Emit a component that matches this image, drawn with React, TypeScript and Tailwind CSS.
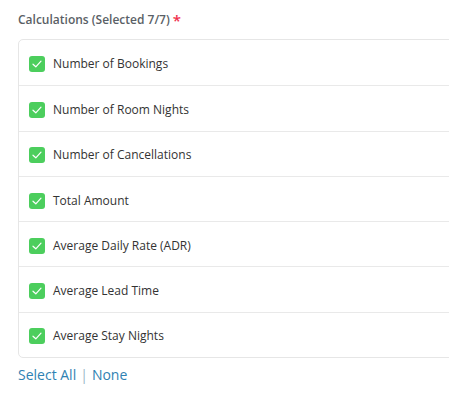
const items = [
  "Number of Bookings",
  "Number of Room Nights",
  "Number of Cancellations",
  "Total Amount",
  "Average Daily Rate (ADR)",
  "Average Lead Time",
  "Average Stay Nights",
];

function CheckBox() {
  return (
    <span className="flex h-4 w-4 shrink-0 items-center justify-center rounded-[3px] bg-[#4cce5d]">
      <svg width="10" height="8" viewBox="0 0 10 8" fill="none">
        <path d="M1 4.2 L3.8 6.8 L9 1.2" stroke="white" strokeWidth="1.2" strokeLinecap="round" strokeLinejoin="round" />
      </svg>
    </span>
  );
}

export default function App() {
  return (
    <div className="h-[411px] w-[449px] overflow-hidden bg-white font-['Open_Sans',sans-serif]">
      <div className="pl-[18px] pt-[11px]">
        {/* label */}
        <div className="flex h-[18px] items-center gap-[3px] text-[12px] font-semibold text-[#5a5f66]">
          <span>Calculations (Selected 7/7)</span>
          <span className="text-[15px] leading-none text-[#f0304c]">*</span>
        </div>

        {/* list */}
        <div className="mt-[10px] w-[460px] rounded-[5px] border border-[#e6e6e6]">
          {items.map((item, i) => (
            <label
              key={i}
              className={
                "flex h-[45.3px] items-center gap-[8px] pl-[10px] pt-[3px] text-[12px] text-[#333]" +
                (i > 0 ? " border-t border-[#e9e9e9]" : "")
              }
            >
              <CheckBox />
              <span>{item}</span>
            </label>
          ))}
        </div>

        {/* footer links */}
        <div className="mt-[6px] flex items-center gap-[4px] text-[14px] text-[#2f82b3]">
          <span>Select All</span>
          <span className="text-[#9bb8c8]">|</span>
          <span>None</span>
        </div>
      </div>
    </div>
  );
}
